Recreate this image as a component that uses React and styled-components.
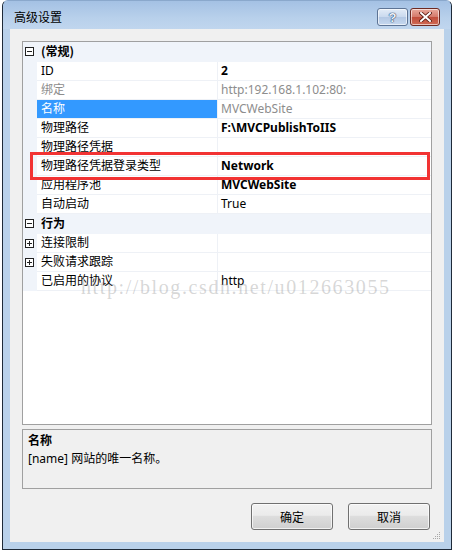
import React from "react";
import styled, { createGlobalStyle } from "styled-components";

const rows = [
  { type: "cat", name: "(常规)", open: true },
  { name: "ID", value: "2", bold: true },
  { name: "绑定", value: "http:192.168.1.102:80:", muted: true },
  { name: "名称", value: "MVCWebSite", selected: true, mutedValue: true },
  { name: "物理路径", value: "F:\\MVCPublishToIIS", bold: true },
  { name: "物理路径凭据", value: "" },
  { name: "物理路径凭据登录类型", value: "Network", bold: true },
  { name: "应用程序池", value: "MVCWebSite", bold: true },
  { name: "自动启动", value: "True" },
  { type: "cat", name: "行为", open: true },
  { name: "连接限制", value: "", box: "plus" },
  { name: "失败请求跟踪", value: "", box: "plus" },
  { name: "已启用的协议", value: "http" },
];

const App = () => {
  return (
    <>
      <GlobalStyle />
      <Window>
        <TitleBar>
          <Title>高级设置</Title>
          <CaptionButtons>
            <HelpButton>?</HelpButton>
            <CloseButton>
              <svg width="13" height="10" viewBox="0 0 13 10">
                <path d="M2 1 L11 9 M11 1 L2 9" stroke="#5a1a10" strokeWidth="3.6" strokeLinecap="square" />
                <path d="M2 1 L11 9 M11 1 L2 9" stroke="#fff" strokeWidth="2" strokeLinecap="square" />
              </svg>
            </CloseButton>
          </CaptionButtons>
        </TitleBar>
        <Client>
          <Grid>
            {rows.map((r, i) =>
              r.type === "cat" ? (
                <CatRow key={i}>
                  <Gutter>
                    <ToggleBox minus={r.open} />
                  </Gutter>
                  <CatName>{r.name}</CatName>
                </CatRow>
              ) : (
                <Row key={i}>
                  <Gutter>{r.box && <ToggleBox />}</Gutter>
                  <NameCell selected={r.selected} muted={r.muted}>
                    {r.name}
                  </NameCell>
                  <ValueCell bold={r.bold} muted={r.muted || r.mutedValue}>
                    {r.value}
                  </ValueCell>
                </Row>
              )
            )}
            <Highlight />
          </Grid>
          <Description>
            <DescTitle>名称</DescTitle>
            <DescText>[name] 网站的唯一名称。</DescText>
          </Description>
          <ButtonBar>
            <DialogButton>确定</DialogButton>
            <DialogButton>取消</DialogButton>
          </ButtonBar>
          <Grip>
            <svg width="8" height="8" viewBox="0 0 8 8">
              <g fill="#a8a8a8">
                <rect x="6" y="0" width="1" height="1" />
                <rect x="4" y="2" width="1" height="1" />
                <rect x="6" y="2" width="1" height="1" />
                <rect x="2" y="4" width="1" height="1" />
                <rect x="4" y="4" width="1" height="1" />
                <rect x="6" y="4" width="1" height="1" />
                <rect x="0" y="6" width="1" height="1" />
                <rect x="2" y="6" width="1" height="1" />
                <rect x="4" y="6" width="1" height="1" />
                <rect x="6" y="6" width="1" height="1" />
              </g>
            </svg>
          </Grip>
        </Client>
        <Watermark>http://blog.csdn.net/u012663055</Watermark>
      </Window>
    </>
  );
};

export default App;

const GlobalStyle = createGlobalStyle`
  body {
    margin: 0;
    background: #fff;
    font-family: "Noto Sans", "Noto Sans CJK SC", sans-serif;
    font-size: 12px;
    color: #000;
  }
`;

const Window = styled.div`
  position: relative;
  margin-left: 2px;
  width: 448px;
  height: 548px;
  border: 1px solid #1e2a38;
  border-top-color: #8aa8cc;
  border-radius: 6px 6px 0 0;
  background: #b9d1ea;
  display: flex;
  flex-direction: column;
`;

const TitleBar = styled.div`
  height: 28px;
  display: flex;
  align-items: flex-start;
  justify-content: space-between;
  padding: 0 11px 0 11px;
  background: linear-gradient(#a4c1e4, #b8d0eb 60%, #c0d6ee);
  border-radius: 5px 5px 0 0;
`;

const Title = styled.div`
  margin-top: 8px;
  font-family: "Noto Sans CJK SC", sans-serif;
  font-size: 12px;
  line-height: 16px;
  color: #000;
`;

const CaptionButtons = styled.div`
  display: flex;
  gap: 2px;
  margin-top: 7px;
`;

const CapButton = styled.div`
  width: 28px;
  height: 16px;
  border: 1px solid #5d7495;
  border-radius: 3px;
  display: flex;
  align-items: center;
  justify-content: center;
  box-shadow: inset 0 0 0 1px rgba(255, 255, 255, 0.6);
`;

const HelpButton = styled(CapButton)`
  width: 29px;
  background: linear-gradient(#e3ecf7, #c9d9ee 50%, #b3c8e4 51%, #c6d8ef);
  font-family: "Liberation Sans", sans-serif;
  font-weight: bold;
  font-size: 13px;
  color: #eef2f7;
  text-shadow: 0 0 1px #28466e, 0 0 1px #28466e, 0 0 1px #28466e;
`;

const CloseButton = styled(CapButton)`
  border-color: #6e2a22;
  background: linear-gradient(#e9a99c, #d4796a 50%, #c14d3b 51%, #cf6a55);
`;

const Client = styled.div`
  position: relative;
  flex: 1;
  margin: 0 7px 7px 7px;
  background: #f0f0f0;
  padding: 12px 12px 0 12px;
  display: flex;
  flex-direction: column;
`;

const Grid = styled.div`
  position: relative;
  height: 382px;
  border: 1px solid #a0a0a0;
  background: #fff;
`;

const Row = styled.div`
  display: grid;
  grid-template-columns: 14px 181px 1fr;
  height: 19px;
`;

const CatRow = styled.div`
  display: grid;
  grid-template-columns: 14px 1fr;
  height: 19px;
  background: #f0f4fa;
  border-bottom: 1px solid #f0f4fa;
`;

const Gutter = styled.div`
  background: #f0f4fa;
  display: flex;
  align-items: center;
  justify-content: flex-end;
  padding-right: 3px;
`;

const ToggleBox = styled.div`
  position: relative;
  width: 7px;
  height: 7px;
  border: 1px solid #222;
  background: #fff;
  &::before {
    content: "";
    position: absolute;
    left: 1px;
    top: 3px;
    width: 5px;
    height: 1px;
    background: #222;
  }
  &::after {
    content: "";
    display: ${(p) => (p.minus ? "none" : "block")};
    position: absolute;
    left: 3px;
    top: 1px;
    width: 1px;
    height: 5px;
    background: #222;
  }
`;

const CatName = styled.div`
  padding-left: 4px;
  line-height: 18px;
  font-weight: bold;
  font-family: "Noto Sans CJK SC", sans-serif;
`;

const NameCell = styled.div`
  padding-left: 4px;
  line-height: 18px;
  border-bottom: 1px solid #eef1f6;
  border-right: 1px solid #eef1f6;
  white-space: nowrap;
  overflow: hidden;
  background: ${(p) => (p.selected ? "#3399ff" : "#fff")};
  color: ${(p) => (p.selected ? "#fff" : p.muted ? "#8d8d8d" : "#000")};
`;

const ValueCell = styled.div`
  padding-left: 3px;
  line-height: 18px;
  border-bottom: 1px solid #eef1f6;
  white-space: nowrap;
  overflow: hidden;
  font-weight: ${(p) => (p.bold ? "bold" : "normal")};
  color: ${(p) => (p.muted ? "#8d8d8d" : "#000")};
`;

const Highlight = styled.div`
  position: absolute;
  left: 7px;
  top: 110px;
  width: 400px;
  height: 28px;
  box-sizing: border-box;
  border: 3px solid #f23333;
  pointer-events: none;
`;

const Description = styled.div`
  margin-top: 4px;
  height: 56px;
  border: 1px solid #a0a0a0;
  background: #f0f0f0;
  padding: 2px 5px 0 5px;
`;

const DescTitle = styled.div`
  font-weight: bold;
  line-height: 18px;
`;

const DescText = styled.div`
  line-height: 18px;
`;

const ButtonBar = styled.div`
  display: flex;
  justify-content: flex-end;
  gap: 15px;
  margin-top: 14px;
  padding-right: 2px;
`;

const DialogButton = styled.div`
  width: 80px;
  height: 25px;
  border: 1px solid #707070;
  border-radius: 3px;
  display: flex;
  align-items: center;
  justify-content: center;
  background: linear-gradient(#f2f2f2, #ebebeb 45%, #dddddd 50%, #cfcfcf);
  box-shadow: inset 0 0 0 1px rgba(255, 255, 255, 0.7);
  font-family: "Noto Sans CJK SC", sans-serif;
`;

const Grip = styled.div`
  position: absolute;
  right: 3px;
  bottom: 2px;
  display: flex;
`;

const Watermark = styled.div`
  position: absolute;
  left: 78px;
  top: 275px;
  font-family: "Liberation Serif", serif;
  font-size: 20px;
  letter-spacing: 1.6px;
  color: rgba(140, 140, 140, 0.35);
  pointer-events: none;
  white-space: nowrap;
`;
